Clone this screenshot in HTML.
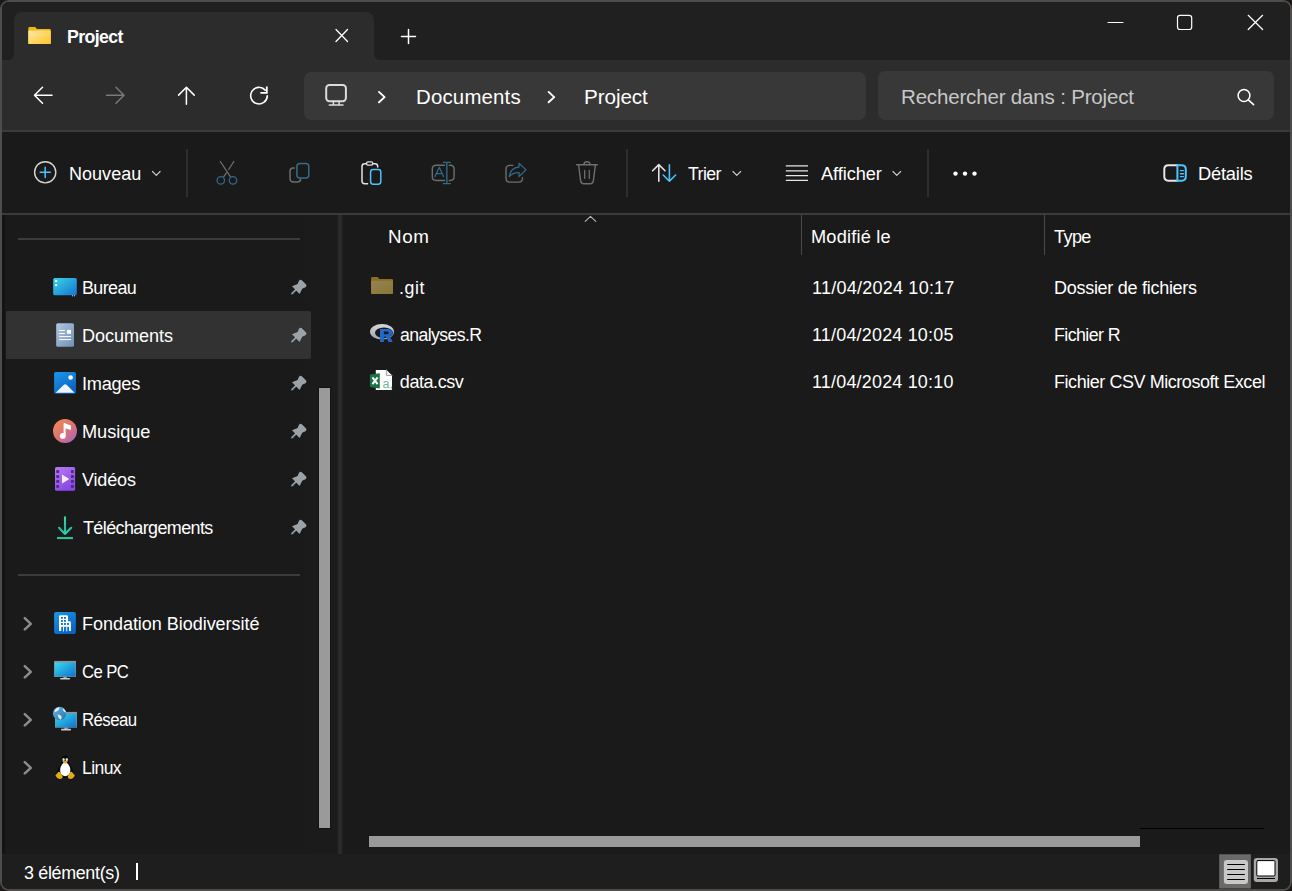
<!DOCTYPE html>
<html><head><meta charset="utf-8">
<style>
*{margin:0;padding:0;box-sizing:border-box}
html,body{width:1292px;height:891px;overflow:hidden;background:#1c1818}
body{font-family:"Liberation Sans",sans-serif;color:#fff;position:relative}
.a{position:absolute}
.win{position:absolute;left:0;top:0;width:1292px;height:891px;border-radius:9px;background:#4e4d4b;overflow:hidden}
.inner{position:absolute;left:2px;top:2px;right:2px;bottom:2px;border-radius:7px;background:#1a1a1a;overflow:hidden}
.t{position:absolute;white-space:nowrap;line-height:24px;font-size:18px}
svg{position:absolute;overflow:visible}
</style></head><body>
<div class="win"><div class="inner" id="in"></div></div>
<!-- title bar -->
<div class="a" style="left:2px;top:2px;width:1288px;height:128px;background:#2c2c2c;border-radius:7px 7px 0 0"></div>
<div class="a" style="left:2px;top:2px;width:1288px;height:18px;background:#202020;border-radius:7px 7px 0 0"></div>
<div class="a" style="left:2px;top:2px;width:12px;height:58px;background:#202020;border-radius:7px 0 6px 0"></div>
<div class="a" style="left:374px;top:2px;width:916px;height:58px;background:#202020;border-radius:0 7px 0 6px"></div>
<!-- tab -->
<div class="a" style="left:14px;top:12px;width:360px;height:48px;background:#2c2c2c;border-radius:8px 8px 0 0"></div>
<div class="a" style="left:2px;top:130px;width:1288px;height:2px;background:#3b3b3b"></div>
<!-- address bar -->
<div class="a" style="left:304px;top:72px;width:562px;height:48px;background:#383838;border-radius:7px"></div>
<!-- search -->
<div class="a" style="left:878px;top:71px;width:396px;height:49px;background:#383838;border-radius:7px"></div>
<!-- command bar -->
<div class="a" style="left:2px;top:132px;width:1288px;height:81px;background:#1a1a1a"></div>
<div class="a" style="left:2px;top:213px;width:1288px;height:2px;background:#3b3b3b"></div>
<!-- status bar -->
<div class="a" style="left:2px;top:854px;width:1288px;height:35px;background:#1e1e1e;border-radius:0 0 7px 7px"></div>

<!-- texts -->


<!-- sidebar -->
<div class="a" style="left:18px;top:238px;width:282px;height:2px;background:#3c3c3c"></div>
<div class="a" style="left:18px;top:574px;width:282px;height:2px;background:#3c3c3c"></div>
<div class="a" style="left:5.5px;top:311px;width:305.5px;height:47.5px;background:#323232;border-radius:1.5px"></div>
<div class="a" style="left:2px;top:215px;width:2.6px;height:639px;background:#131313"></div>
<!-- sidebar scrollbar -->
<div class="a" style="left:311px;top:215px;width:27px;height:639px;background:#1b1b1b"></div>
<div class="a" style="left:318px;top:387px;width:13px;height:442px;background:#141414"></div>
<div class="a" style="left:319px;top:388px;width:11px;height:440px;background:#9a9a9a"></div>
<!-- divider -->
<div class="a" style="left:337px;top:215px;width:6px;height:639px;background:#202020"></div><div class="a" style="left:338px;top:215px;width:4px;height:639px;background:#252525"></div><div class="a" style="left:339px;top:215px;width:2px;height:639px;background:#2d2d2d"></div>

<!-- header -->
<div class="a" style="left:801px;top:215px;width:1px;height:40px;background:#4a4a4a"></div>
<div class="a" style="left:1044px;top:215px;width:1px;height:40px;background:#4a4a4a"></div>

<!-- rows -->

<!-- h scrollbar -->
<div class="a" style="left:369px;top:836px;width:771px;height:11px;background:#9a9a9a"></div>
<div class="a" style="left:1140px;top:828px;width:124px;height:1px;background:#000"></div>

<!-- status -->
<div class="a" style="left:136px;top:863px;width:2px;height:17px;background:#fff"></div>


<svg style="left:0;top:0;position:absolute" width="1292" height="891" viewBox="0 0 1292 891" fill="none" stroke-linecap="round" stroke-linejoin="round">
<defs>
 <linearGradient id="gFold" x1="0" y1="0" x2="1" y2="1"><stop offset="0" stop-color="#ffeaa8"/><stop offset="1" stop-color="#ffc426"/></linearGradient>
 <linearGradient id="gDesk" x1="0" y1="0" x2="1" y2="1"><stop offset="0" stop-color="#3ad4e4"/><stop offset="1" stop-color="#1474d4"/></linearGradient>
 <linearGradient id="gDoc" x1="0" y1="0" x2="1" y2="1"><stop offset="0" stop-color="#b4c8e0"/><stop offset="1" stop-color="#6e90b8"/></linearGradient>
 <linearGradient id="gImg" x1="0" y1="0" x2="0.6" y2="1"><stop offset="0" stop-color="#1c98e8"/><stop offset="1" stop-color="#0a62c4"/></linearGradient>
 <linearGradient id="gMus" x1="0" y1="0" x2="0.9" y2="1"><stop offset="0" stop-color="#f68c4c"/><stop offset="0.6" stop-color="#d8707a"/><stop offset="1" stop-color="#a464c8"/></linearGradient>
 <linearGradient id="gVid" x1="0" y1="0" x2="0.5" y2="1"><stop offset="0" stop-color="#b67af2"/><stop offset="1" stop-color="#8a48e6"/></linearGradient>
 <linearGradient id="gDl" x1="0" y1="0" x2="0.3" y2="1"><stop offset="0" stop-color="#40e09a"/><stop offset="0.7" stop-color="#22bca8"/><stop offset="1" stop-color="#2ad0a0"/></linearGradient>
 <linearGradient id="gScr" x1="0" y1="0" x2="1" y2="1"><stop offset="0" stop-color="#36dcec"/><stop offset="1" stop-color="#1070d0"/></linearGradient>
 <linearGradient id="gGlobe" x1="0" y1="0" x2="1" y2="1"><stop offset="0" stop-color="#6ab8e8"/><stop offset="1" stop-color="#2a70a8"/></linearGradient>
 <linearGradient id="gRing" x1="0" y1="0" x2="0" y2="1"><stop offset="0" stop-color="#d8d8dc"/><stop offset="1" stop-color="#a4a4a8"/></linearGradient>
 <linearGradient id="gGit" x1="0" y1="0" x2="1" y2="1"><stop offset="0" stop-color="#948454"/><stop offset="1" stop-color="#8a7634"/></linearGradient>
</defs>
<!-- tab folder -->
<path d="M28.3 28.2 Q28.3 26.9 29.6 26.9 H35.2 L37 29 H49.6 Q50.8 29 50.8 30.2 V42.9 Q50.8 44.1 49.6 44.1 H29.5 Q28.3 44.1 28.3 42.9 Z" fill="#f2b60c"/>
<path d="M28.3 31.8 Q28.3 30.6 29.5 30.6 H49.6 Q50.8 30.6 50.8 31.8 V42.9 Q50.8 44.1 49.6 44.1 H29.5 Q28.3 44.1 28.3 42.9 Z" fill="url(#gFold)"/>
<!-- tab close and plus -->
<path d="M336 29.5 L347.5 41.5 M347.5 29.5 L336 41.5" stroke="#fff" stroke-width="1.3"/>
<path d="M408.5 29.5 V43.5 M401.5 36.5 H415.5" stroke="#fff" stroke-width="1.5"/>
<!-- caption buttons -->
<path d="M1108 22.5 H1123" stroke="#fff" stroke-width="1.1"/>
<rect x="1177.5" y="15.3" width="14.2" height="14.2" rx="2.5" stroke="#fff" stroke-width="1.2"/>
<path d="M1248.2 15.3 L1262.6 29.5 M1262.6 15.3 L1248.2 29.5" stroke="#fff" stroke-width="1.2"/>
<!-- nav -->
<path d="M34.5 95.2 H52 M34.5 95.2 L42.5 87.2 M34.5 95.2 L42.5 103.2" stroke="#fff" stroke-width="1.5"/>
<path d="M124 95.2 H106.5 M124 95.2 L116 87.2 M124 95.2 L116 103.2" stroke="#7a7a7a" stroke-width="1.5"/>
<path d="M186.4 87.3 V104.3 M186.4 87.3 L178.6 95.1 M186.4 87.3 L194.2 95.1" stroke="#fff" stroke-width="1.5"/>
<path d="M267.3 95.9 A8.3 8.3 0 1 1 265.2 90.1" stroke="#fff" stroke-width="1.6"/>
<path d="M266.8 87.4 V92.8 H261.3" stroke="#fff" stroke-width="1.8" stroke-linecap="square" stroke-linejoin="miter"/>
<!-- address monitor -->
<rect x="326.2" y="84.9" width="19.7" height="16.3" rx="3.2" stroke="#dcdcdc" stroke-width="2"/>
<path d="M333.4 101.5 V105 M339.1 101.5 V105 M329.3 105 H343" stroke="#dcdcdc" stroke-width="1.5"/>
<path d="M379 91.9 L384.6 97.1 L379 102.3" stroke="#fff" stroke-width="1.9"/>
<path d="M548.6 91.9 L554.2 97.1 L548.6 102.3" stroke="#fff" stroke-width="1.9"/>
<!-- search icon -->
<circle cx="1244" cy="95.5" r="5.9" stroke="#fff" stroke-width="1.5"/>
<path d="M1248.3 99.8 L1253.6 104.6" stroke="#fff" stroke-width="1.6"/>
<!-- Nouveau -->
<circle cx="45.2" cy="172.3" r="10.6" stroke="#d4d4d4" stroke-width="1.4"/>
<path d="M45.2 167.2 V177.4 M40.1 172.3 H50.3" stroke="#4cc2ff" stroke-width="1.5"/>
<path d="M152.5 171.5 L156.3 175.3 L160.1 171.5" stroke="#c8c8c8" stroke-width="1.2"/>
<path d="M733 171.5 L736.8 175.3 L740.6 171.5" stroke="#c8c8c8" stroke-width="1.2"/>
<path d="M893 171.5 L896.8 175.3 L900.6 171.5" stroke="#c8c8c8" stroke-width="1.2"/>
<!-- separators -->
<rect x="186" y="149" width="2" height="48" fill="#2e2e2e"/><rect x="626" y="149" width="2" height="48" fill="#2e2e2e"/><rect x="927" y="149" width="2" height="48" fill="#2e2e2e"/>
<!-- cut -->
<path d="M220.3 161.5 L230.3 176.6 M233.8 161.5 L228.7 169.5 M226.4 172.9 L223.8 176.6" stroke="#6e6e6e" stroke-width="1.3"/>
<circle cx="220.8" cy="180.4" r="3.7" stroke="#2f6a8a" stroke-width="1.3"/>
<circle cx="233" cy="180.4" r="3.7" stroke="#2f6a8a" stroke-width="1.3"/>
<!-- copy -->
<path d="M294.3 168.1 H293.3 Q290 168.1 290 171.4 V178.6 Q290 182 293.4 182 H297.3 Q300.6 182 300.6 179" stroke="#6e6e6e" stroke-width="1.5"/>
<rect x="296.9" y="163.4" width="11.9" height="14.6" rx="3" stroke="#336d8e" stroke-width="1.5"/>
<!-- paste -->
<path d="M366 163.8 H364.7 Q362 163.8 362 166.5 V181.1 Q362 183.8 364.7 183.8 H367.6 M373.4 163.8 H375 Q377.7 163.8 377.7 166.5 V167" stroke="#e2e2e2" stroke-width="1.5"/>
<rect x="366.5" y="161.9" width="6.3" height="3.2" rx="1.6" stroke="#e2e2e2" stroke-width="1.4"/>
<rect x="370.6" y="169.4" width="10.2" height="14.8" rx="2.6" stroke="#4cc2ff" stroke-width="1.5"/>
<!-- rename -->
<path d="M444.5 165.2 H436.2 Q432.3 165.2 432.3 169.1 V176.6 Q432.3 180.5 436.2 180.5 H444.5 M449.3 165.2 H450.2 Q454.1 165.2 454.1 169.1 V176.6 Q454.1 180.5 450.2 180.5 H449.3" stroke="#6e6e6e" stroke-width="1.4"/>
<path d="M446.8 162.4 V183.6 M443.4 162.4 H450.3 M443.4 183.6 H450.3" stroke="#2f6a8a" stroke-width="1.4"/>
<path d="M435 176.6 L439.3 167.3 L443.5 176.6 M436.6 173.6 H442" stroke="#2f6a8a" stroke-width="1.3"/>
<!-- share -->
<path d="M512.8 165.4 H509.9 Q506 165.4 506 169.3 V178.2 Q506 182.1 509.9 182.1 H518.6 Q522.5 182.1 522.5 178.2 V177.8" stroke="#6e6e6e" stroke-width="1.4"/>
<path d="M519 163.3 L526 169.9 L519 176.5 V172.6 Q513 172.3 509.3 176.5 Q510.5 167.8 519 167 Z" stroke="#2f6a8a" stroke-width="1.3"/>
<!-- delete -->
<path d="M576.6 164.8 H597.4 M583.8 164.6 Q584.2 161.8 587 161.8 Q589.8 161.8 590.2 164.6" stroke="#6e6e6e" stroke-width="1.4"/>
<path d="M578.6 165 L580.6 180.6 Q581 183.8 584 183.8 H590 Q593 183.8 593.4 180.6 L595.4 165" stroke="#6e6e6e" stroke-width="1.4"/>
<path d="M584.7 170.4 V178.3 M589.3 170.4 V178.3" stroke="#6e6e6e" stroke-width="1.3"/>
<!-- sort -->
<path d="M658.8 164.8 V181.3 M652.6 170.8 L658.8 164.6 L665 170.8" stroke="#e2e2e2" stroke-width="1.6"/>
<path d="M669.4 164.8 V180.8 M663.2 175 L669.4 181.2 L675.6 175" stroke="#4cc2ff" stroke-width="1.6"/>
<!-- afficher lines -->
<path d="M785.8 165.8 H808 M785.8 170.8 H808 M785.8 175.6 H808 M785.8 180.4 H808" stroke="#e6e6e6" stroke-width="1.3" stroke-linecap="butt"/>
<!-- dots -->
<circle cx="955.5" cy="173.6" r="2.2" fill="#fff"/><circle cx="965" cy="173.6" r="2.2" fill="#fff"/><circle cx="974.5" cy="173.6" r="2.2" fill="#fff"/>
<!-- details -->
<path d="M1177.4 165.2 H1168.4 Q1164.3 165.2 1164.3 169.3 V176.6 Q1164.3 180.7 1168.4 180.7 H1177.4" stroke="#e6e6e6" stroke-width="2"/>
<path d="M1177.4 165.2 H1181.7 Q1185.8 165.2 1185.8 169.3 V176.6 Q1185.8 180.7 1181.7 180.7 H1177.4 Z" stroke="#4cc2ff" stroke-width="2"/>
<path d="M1180.4 170.6 H1183.5 M1180.4 173.7 H1183.5 M1180.4 176.6 H1183.5" stroke="#4cc2ff" stroke-width="1.4"/>

<!-- sidebar icons -->
<rect x="53.2" y="278" width="23.6" height="17.3" rx="1.6" fill="url(#gDesk)"/>
<rect x="55.2" y="280.2" width="2" height="1.9" fill="#fff"/><rect x="55.2" y="284.2" width="2" height="1.9" fill="#fff"/>
<rect x="72" y="295.3" width="1" height="1" fill="#ddd"/><rect x="74" y="295.3" width="1" height="1" fill="#ddd"/>
<rect x="56.2" y="323.2" width="17.8" height="23.6" rx="1.6" fill="url(#gDoc)"/>
<path d="M59.2 330.5 H64.8 M59.2 333.5 H64.8 M59.2 336.6 H71 M59.2 339.6 H71" stroke="#fff" stroke-width="1" stroke-linecap="butt"/>
<rect x="67" y="329.9" width="4" height="3.9" fill="#fff"/>
<rect x="54.1" y="372.1" width="21.9" height="21.6" rx="1.8" fill="url(#gImg)"/>
<circle cx="70.6" cy="377.5" r="2.3" fill="#fff"/>
<path d="M55.7 392.8 L63.6 385 Q65.2 383.5 66.8 385 L74.6 392.8 Z" fill="#eef6fc"/>
<circle cx="65" cy="430.9" r="12" fill="url(#gMus)"/>
<path d="M64.6 423.3 V436" stroke="#fff" stroke-width="2" stroke-linecap="butt"/>
<path d="M64 423 L70.9 425.5 V430 L64 428 Z" fill="#fff"/>
<circle cx="62.8" cy="435.9" r="2.9" fill="#fff"/>
<rect x="55" y="467" width="20.1" height="23.8" rx="1.6" fill="url(#gVid)"/>
<g fill="#4a2a78"><rect x="56.3" y="470.2" width="2.8" height="2.7"/><rect x="56.3" y="475.2" width="2.8" height="2.7"/><rect x="56.3" y="480.1" width="2.8" height="2.7"/><rect x="56.3" y="485.1" width="2.8" height="2.7"/>
<rect x="71" y="470.2" width="2.8" height="2.7"/><rect x="71" y="475.2" width="2.8" height="2.7"/><rect x="71" y="480.1" width="2.8" height="2.7"/><rect x="71" y="485.1" width="2.8" height="2.7"/></g>
<path d="M62 474.4 L69.3 478.9 L62 483.4 Z" fill="#f4eefc"/>
<path d="M65 517.3 V534 M59 527.8 L65 534 L71.2 527.8" stroke="url(#gDl)" stroke-width="2.1"/>
<rect x="57" y="537.1" width="16" height="2" fill="url(#gDl)"/>
<g transform="translate(0 0)"><path d="M292 286.3 L297.6 283.9 L299.1 280.6 Q300.4 278.9 301.8 280.3 L306.1 284.6 Q307.3 286 305.5 287.2 L302.2 288.7 L299.6 294.1 Z" fill="#9aa3a8"/><path d="M292 293.6 L296 289.6" stroke="#9aa3a8" stroke-width="1.6"/></g>
<g transform="translate(0 48)"><path d="M292 286.3 L297.6 283.9 L299.1 280.6 Q300.4 278.9 301.8 280.3 L306.1 284.6 Q307.3 286 305.5 287.2 L302.2 288.7 L299.6 294.1 Z" fill="#9aa3a8"/><path d="M292 293.6 L296 289.6" stroke="#9aa3a8" stroke-width="1.6"/></g>
<g transform="translate(0 96)"><path d="M292 286.3 L297.6 283.9 L299.1 280.6 Q300.4 278.9 301.8 280.3 L306.1 284.6 Q307.3 286 305.5 287.2 L302.2 288.7 L299.6 294.1 Z" fill="#9aa3a8"/><path d="M292 293.6 L296 289.6" stroke="#9aa3a8" stroke-width="1.6"/></g>
<g transform="translate(0 144)"><path d="M292 286.3 L297.6 283.9 L299.1 280.6 Q300.4 278.9 301.8 280.3 L306.1 284.6 Q307.3 286 305.5 287.2 L302.2 288.7 L299.6 294.1 Z" fill="#9aa3a8"/><path d="M292 293.6 L296 289.6" stroke="#9aa3a8" stroke-width="1.6"/></g>
<g transform="translate(0 192)"><path d="M292 286.3 L297.6 283.9 L299.1 280.6 Q300.4 278.9 301.8 280.3 L306.1 284.6 Q307.3 286 305.5 287.2 L302.2 288.7 L299.6 294.1 Z" fill="#9aa3a8"/><path d="M292 293.6 L296 289.6" stroke="#9aa3a8" stroke-width="1.6"/></g>
<g transform="translate(0 240)"><path d="M292 286.3 L297.6 283.9 L299.1 280.6 Q300.4 278.9 301.8 280.3 L306.1 284.6 Q307.3 286 305.5 287.2 L302.2 288.7 L299.6 294.1 Z" fill="#9aa3a8"/><path d="M292 293.6 L296 289.6" stroke="#9aa3a8" stroke-width="1.6"/></g>
<path d="M24.8 618.2 L30.8 623.8 L24.8 629.4" stroke="#8c8c8c" stroke-width="2.5"/>
<path d="M24.8 666.2 L30.8 671.8 L24.8 677.4" stroke="#8c8c8c" stroke-width="2.5"/>
<path d="M24.8 714.2 L30.8 719.8 L24.8 725.4" stroke="#8c8c8c" stroke-width="2.5"/>
<path d="M24.8 762.2 L30.8 767.8 L24.8 773.4" stroke="#8c8c8c" stroke-width="2.5"/>

<!-- lower sidebar icons -->
<rect x="54.1" y="611.9" width="21.8" height="22" rx="2" fill="url(#gImg)"/>
<path d="M59 631 V616.6 Q59 615.2 60.4 615.2 H66.6 Q68 615.2 68 616.6 V621.3 H69.6 Q70.9 621.3 70.9 622.6 V631 Z" fill="#fff"/>
<g fill="#0f72cc"><rect x="61" y="617" width="1.9" height="1.8"/><rect x="64" y="617" width="1.9" height="1.8"/><rect x="61" y="620" width="1.9" height="1.8"/><rect x="64" y="620" width="1.9" height="1.8"/><rect x="61" y="623" width="1.9" height="1.9"/><rect x="64" y="623" width="1.9" height="1.9"/><rect x="67" y="623" width="1.9" height="1.9"/><rect x="61.2" y="626.8" width="7.8" height="4.2"/></g>
<path d="M63.5 627 V631 M66.7 627 V631" stroke="#fff" stroke-width="0.9"/>
<rect x="54.1" y="660.9" width="21.9" height="16" fill="#8d949a"/>
<rect x="54.6" y="662.5" width="20.9" height="14" fill="url(#gScr)"/>
<rect x="63.3" y="676.9" width="3.4" height="1.4" fill="#9aa"/>
<rect x="60" y="678" width="10.1" height="1.5" rx="0.7" fill="#c8ccd0"/>
<rect x="55" y="711.9" width="22" height="15.7" fill="#8d949a"/>
<rect x="55.5" y="713.5" width="21" height="13.8" fill="url(#gScr)"/>
<rect x="64.3" y="727.6" width="3.4" height="1.4" fill="#9aa"/>
<rect x="61" y="728.8" width="10" height="1.6" rx="0.7" fill="#c8ccd0"/>
<circle cx="59.6" cy="713.4" r="6.7" fill="url(#gGlobe)"/>
<path d="M54.5 710.5 Q56 707.6 59 707.2 Q60 708.6 58.5 710 Q57 711.5 55.2 712.2 Z M57.5 714.5 Q60 714.3 61.5 716.5 Q62 718.5 60.5 719.8 Q58.5 718.5 57.5 714.5 Z M62.5 708 Q65.5 709.5 66.2 712.5 Q64.5 712.5 63 710.5 Z" fill="#e4eef6"/>
<!-- tux -->
<path d="M65.2 755.5 Q61.8 755.6 61.7 759.5 Q61.6 763 60.2 765.5 Q57 769.5 56.5 773.5 Q57.5 777.8 65.2 778 Q72.9 777.8 73.9 773.5 Q73.4 769.5 70.2 765.5 Q68.8 763 68.7 759.5 Q68.6 755.6 65.2 755.5 Z" fill="#0a0a0a"/>
<path d="M65.2 762 Q61.3 763.5 60.2 769 Q59.5 775.5 65.2 776.3 Q70.9 775.5 70.3 769 Q69.1 763.5 65.2 762 Z" fill="#fff"/>
<ellipse cx="63.6" cy="759.6" rx="1.2" ry="1.5" fill="#e0e0e0"/><ellipse cx="66.8" cy="759.6" rx="1.2" ry="1.5" fill="#e0e0e0"/>
<path d="M62.3 761.3 Q65.2 760 67.9 761.3 Q66.5 763.5 65.2 763.6 Q63.8 763.5 62.3 761.3 Z" fill="#e8a818"/>
<path d="M55.4 775.5 L58.5 771.8 Q60.5 772 61.2 773.8 L62.8 777 Q62.5 778.8 59.5 779 Q56.5 778 55.4 775.5 Z" fill="#e4aa18"/>
<path d="M74.9 775.5 L71.8 771.8 Q69.8 772 69.1 773.8 L67.6 777 Q67.9 778.8 70.9 779 Q73.9 778 74.9 775.5 Z" fill="#e4aa18"/>
<!-- content: sort caret -->
<path d="M585.2 221.4 L590.5 216.3 L595.8 221.4" stroke="#b4b4b4" stroke-width="1.1"/>
<!-- git folder -->
<path d="M371.1 278.3 Q371.1 277.1 372.3 277.1 H377.6 L379.4 278.9 H391.8 Q393 278.9 393 280.1 V292.7 Q393 293.9 391.8 293.9 H372.3 Q371.1 293.9 371.1 292.7 Z" fill="#8c6e1e"/>
<path d="M371.1 282 Q371.1 280.8 372.3 280.8 H391.8 Q393 280.8 393 282 V292.7 Q393 293.9 391.8 293.9 H372.3 Q371.1 293.9 371.1 292.7 Z" fill="url(#gGit)"/>
<!-- R -->
<path d="M394 331.7 A12 7.8 0 1 1 370 331.7 A12 7.8 0 1 1 394 331.7 Z M393 332.8 A9 5.4 0 1 0 375 332.8 A9 5.4 0 1 0 393 332.8 Z" fill="url(#gRing)" fill-rule="evenodd"/>
<path d="M380 328.9 H388 Q392.5 328.9 392.5 332.6 Q392.5 335.3 389.6 336.2 L392.8 341.9 H388.6 L385.9 336.8 H383.9 V341.9 H380 Z M383.9 331.6 V334.3 H387.3 Q388.7 334.3 388.7 333 Q388.7 331.6 387.3 331.6 Z" fill="#2068cc" fill-rule="evenodd"/>
<!-- excel -->
<path d="M375.8 369.9 H386.4 L392 375.5 V389.9 H375.8 Z" fill="#fff"/>
<path d="M386.4 369.9 V375.5 H392" stroke="#9a9a9a" stroke-width="0.9" fill="#f0f0f0"/>
<path d="M369.9 374.5 L379.8 373.2 V388.4 L369.9 387 Z" fill="#1e7145"/>
<path d="M372.4 377.3 L377.6 384.1 M377.6 377.3 L372.4 384.1" stroke="#fff" stroke-width="2" stroke-linecap="butt"/>
<text x="382.6" y="388.2" font-family="Liberation Sans" font-size="12.5" fill="#6cb890">a,</text>
<!-- status view buttons -->
<rect x="1219.2" y="854.3" width="31.7" height="34.2" fill="#6a6a6a"/>
<rect x="1223.9" y="860" width="24.1" height="24" rx="3" fill="#c8c8c8"/>
<path d="M1227.2 864.5 H1244.8 M1227.2 869.5 H1244.8 M1227.2 874.5 H1244.8 M1227.2 879.5 H1244.8" stroke="#000" stroke-width="1" stroke-linecap="butt"/>
<rect x="1253.8" y="857.9" width="24.2" height="24.1" rx="3" fill="#a8a8a8"/>
<rect x="1256.8" y="860.6" width="18.2" height="15.4" rx="1" fill="#fff" stroke="#000" stroke-width="1"/>
<path d="M1257 878.5 H1275" stroke="#000" stroke-width="1" stroke-linecap="butt"/>

</svg>
<div class="t" style="left:66.72px;top:24.76px;font-size:18px;font-weight:bold;letter-spacing:-0.6px;color:#fff;transform:scaleX(0.9842);transform-origin:0 0">Project</div>
<div class="t" style="left:416.00px;top:84.90px;font-size:20.5px;font-weight:normal;letter-spacing:0.188px;color:#fff;transform:scaleX(0.9952);transform-origin:0 0">Documents</div>
<div class="t" style="left:583.99px;top:84.90px;font-size:20.5px;font-weight:normal;letter-spacing:-0.083px;color:#fff;transform:scaleX(1.0081);transform-origin:0 0">Project</div>
<div class="t" style="left:901.00px;top:84.90px;font-size:20.5px;font-weight:normal;letter-spacing:-0.167px;color:#c8c8c8;transform:scaleX(1.0000);transform-origin:0 0">Rechercher dans : Project</div>
<div class="t" style="left:69.40px;top:161.76px;font-size:18px;font-weight:normal;letter-spacing:0.017px;color:#fff;transform:scaleX(1.0014);transform-origin:0 0">Nouveau</div>
<div class="t" style="left:688.00px;top:161.76px;font-size:18px;font-weight:normal;letter-spacing:-0.6px;color:#fff;transform:scaleX(0.9853);transform-origin:0 0">Trier</div>
<div class="t" style="left:821.00px;top:161.76px;font-size:18px;font-weight:normal;letter-spacing:-0.057px;color:#fff;transform:scaleX(1.0100);transform-origin:0 0">Afficher</div>
<div class="t" style="left:1198.48px;top:161.76px;font-size:18px;font-weight:normal;letter-spacing:-0.2px;color:#fff;transform:scaleX(1.0154);transform-origin:0 0">Détails</div>
<div class="t" style="left:81.71px;top:275.76px;font-size:18px;font-weight:normal;letter-spacing:-0.6px;color:#fff;transform:scaleX(0.9943);transform-origin:0 0">Bureau</div>
<div class="t" style="left:81.69px;top:323.76px;font-size:18px;font-weight:normal;letter-spacing:-0.063px;color:#fff;transform:scaleX(1.0056);transform-origin:0 0">Documents</div>
<div class="t" style="left:81.69px;top:371.76px;font-size:18px;font-weight:normal;letter-spacing:-0.28px;color:#fff;transform:scaleX(1.0107);transform-origin:0 0">Images</div>
<div class="t" style="left:81.69px;top:419.76px;font-size:18px;font-weight:normal;letter-spacing:-0.05px;color:#fff;transform:scaleX(1.0106);transform-origin:0 0">Musique</div>
<div class="t" style="left:82.30px;top:467.76px;font-size:18px;font-weight:normal;letter-spacing:-0.18px;color:#fff;transform:scaleX(1.0019);transform-origin:0 0">Vidéos</div>
<div class="t" style="left:82.70px;top:515.76px;font-size:18px;font-weight:normal;letter-spacing:-0.6px;color:#fff;transform:scaleX(0.9969);transform-origin:0 0">Téléchargements</div>
<div class="t" style="left:81.60px;top:611.76px;font-size:18px;font-weight:normal;letter-spacing:-0.038px;color:#fff;transform:scaleX(1.0011);transform-origin:0 0">Fondation Biodiversité</div>
<div class="t" style="left:81.67px;top:659.76px;font-size:18px;font-weight:normal;letter-spacing:-0.6px;color:#fff;transform:scaleX(0.9265);transform-origin:0 0">Ce PC</div>
<div class="t" style="left:82.07px;top:707.76px;font-size:18px;font-weight:normal;letter-spacing:-0.6px;color:#fff;transform:scaleX(0.9333);transform-origin:0 0">Réseau</div>
<div class="t" style="left:81.62px;top:755.76px;font-size:18px;font-weight:normal;letter-spacing:-0.6px;color:#fff;transform:scaleX(0.9750);transform-origin:0 0">Linux</div>
<div class="t" style="left:387.96px;top:224.76px;font-size:18px;font-weight:normal;letter-spacing:0.6px;color:#fff;transform:scaleX(1.0432);transform-origin:0 0">Nom</div>
<div class="t" style="left:810.99px;top:224.76px;font-size:18px;font-weight:normal;letter-spacing:0.2px;color:#fff;transform:scaleX(1.0104);transform-origin:0 0">Modifié le</div>
<div class="t" style="left:1054.00px;top:224.76px;font-size:18px;font-weight:normal;letter-spacing:-0.6px;color:#fff;transform:scaleX(1.0054);transform-origin:0 0">Type</div>
<div class="t" style="left:399.01px;top:275.76px;font-size:18px;font-weight:normal;letter-spacing:0.567px;color:#fff;transform:scaleX(0.9880);transform-origin:0 0">.git</div>
<div class="t" style="left:399.52px;top:322.76px;font-size:18px;font-weight:normal;letter-spacing:-0.6px;color:#fff;transform:scaleX(0.9817);transform-origin:0 0">analyses.R</div>
<div class="t" style="left:399.80px;top:369.76px;font-size:18px;font-weight:normal;letter-spacing:-0.429px;color:#fff;transform:scaleX(1.0000);transform-origin:0 0">data.csv</div>
<div class="t" style="left:811.70px;top:275.76px;font-size:18px;font-weight:normal;letter-spacing:0.22px;color:#fff;transform:scaleX(1.0021);transform-origin:0 0">11/04/2024 10:17</div>
<div class="t" style="left:811.70px;top:322.76px;font-size:18px;font-weight:normal;letter-spacing:0.22px;color:#fff;transform:scaleX(0.9950);transform-origin:0 0">11/04/2024 10:05</div>
<div class="t" style="left:811.70px;top:369.76px;font-size:18px;font-weight:normal;letter-spacing:0.22px;color:#fff;transform:scaleX(0.9950);transform-origin:0 0">11/04/2024 10:10</div>
<div class="t" style="left:1054.00px;top:275.76px;font-size:18px;font-weight:normal;letter-spacing:-0.278px;color:#fff;transform:scaleX(1.0000);transform-origin:0 0">Dossier de fichiers</div>
<div class="t" style="left:1054.01px;top:322.76px;font-size:18px;font-weight:normal;letter-spacing:-0.6px;color:#fff;transform:scaleX(0.9908);transform-origin:0 0">Fichier R</div>
<div class="t" style="left:1054.00px;top:369.76px;font-size:18px;font-weight:normal;letter-spacing:-0.435px;color:#fff;transform:scaleX(0.9986);transform-origin:0 0">Fichier CSV Microsoft Excel</div>
<div class="t" style="left:23.61px;top:860.76px;font-size:18px;font-weight:normal;letter-spacing:-0.327px;color:#fff;transform:scaleX(0.9937);transform-origin:0 0">3 élément(s)</div>

</body></html>
